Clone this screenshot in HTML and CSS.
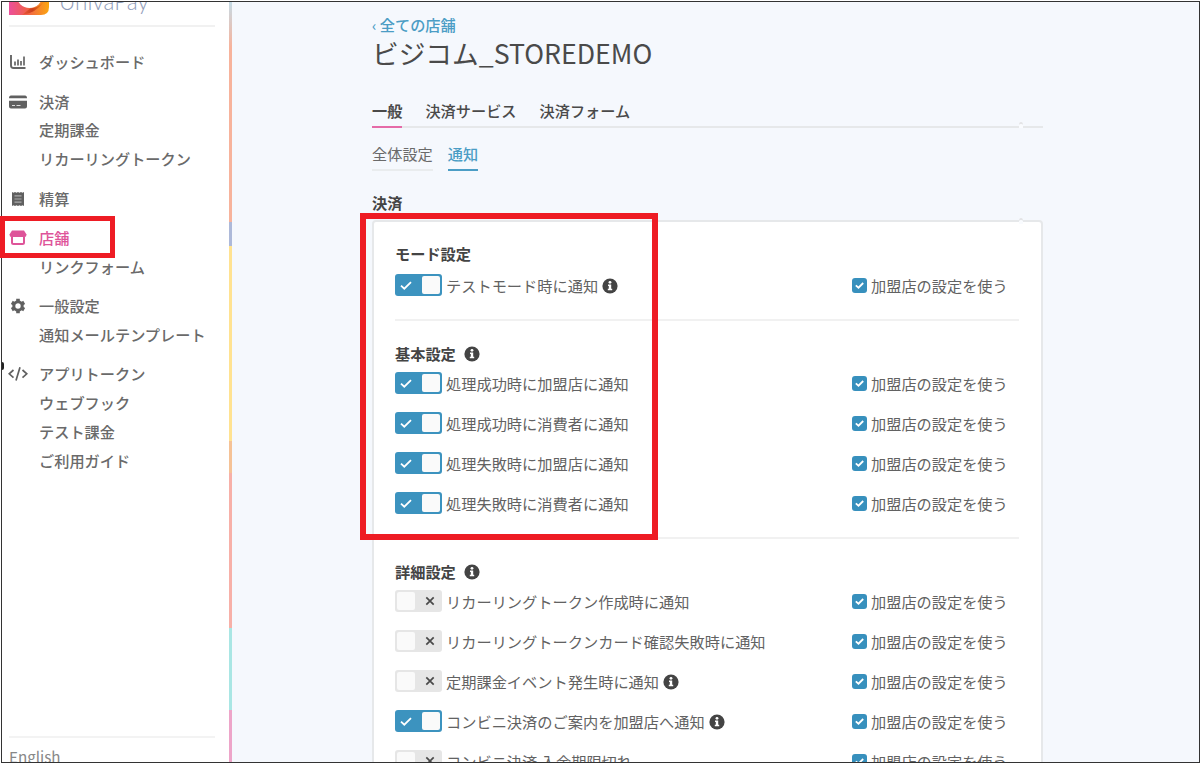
FILE: index.html
```html
<!DOCTYPE html>
<html lang="ja">
<head>
    <meta charset="UTF-8">
    <meta name="viewport" content="width=device-width, initial-scale=1.0">
    <title>ビジコム_STOREDEMO</title>
    <link rel="stylesheet" href="styles.css">
</head>
<body>

<!-- shared icons -->
<svg class="defs" width="0" height="0">
    <symbol id="check" viewBox="0 0 12 9"><path d="M1 4.6 L4.3 7.7 L11 1.2" fill="none" stroke="#fff" stroke-width="1.8"/></symbol>
    <symbol id="cross" viewBox="0 0 10 10"><path d="M1.3 1.3 L8.7 8.7 M8.7 1.3 L1.3 8.7" fill="none" stroke="#4a4a4a" stroke-width="1.7"/></symbol>
    <symbol id="info" viewBox="0 0 16 16"><circle cx="8" cy="8" r="7.6" fill="#444"/><circle cx="8" cy="4.3" r="1.4" fill="#fff"/><path d="M6 6.6 H9.2 V10.8 H10.2 V12.3 H5.8 V10.8 H6.8 V8.1 H6 Z" fill="#fff"/></symbol>
    <symbol id="box" viewBox="0 0 15 15"><rect width="15" height="15" rx="3" fill="#3790bd"/><path d="M3.8 7.3 L6.5 9.7 L11.2 5" fill="none" stroke="#fff" stroke-width="1.8"/></symbol>
</svg>

<div id="frame">
    <div id="sidebar">
        <div class="logo">
            <svg width="40" height="40" viewBox="0 0 40 40">
                <defs>
                    <linearGradient id="lg" x1="0" x2="1"><stop offset="0" stop-color="#ec4f9c"/><stop offset=".45" stop-color="#f0604a"/><stop offset="1" stop-color="#fba60f"/></linearGradient>
                    <linearGradient id="lg2" x1="0" x2="1"><stop offset="0" stop-color="#ee5a3c"/><stop offset=".45" stop-color="#c93f1c"/><stop offset="1" stop-color="#f9930f"/></linearGradient>
                </defs>
                <path d="M0 0 H40 V32 Q40 40 32 40 H0 Z" fill="url(#lg)"/>
                <path d="M13 40 Q28 38 36 25 Q30 33 21 33.5 Z" fill="url(#lg2)"/>
                <circle cx="20.500" cy="20" r="13" fill="#fff"/>
            </svg>
            <span>UnivaPay</span>
        </div>
        <ul class="menu">
            <li class="top"><svg width="18" height="16" viewBox="0 0 18 16"><path d="M2 1 V11.500 Q2 14 4.500 14 H16.500" fill="none" stroke="#666" stroke-width="1.900"/><path d="M6 11.500 V7.500 M9 11.500 V5.500 M12 11.500 V7 M15 11.500 V2.500" stroke="#666" stroke-width="1.700"/></svg>ダッシュボード</li>
            <li class="top"><svg width="18" height="16" viewBox="0 0 18 16"><path d="M2 1.500 H16 Q18 1.500 18 4.300 H0 Q0 1.500 2 1.500 Z M0 6.800 H18 V12.500 Q18 14.500 16 14.500 H2 Q0 14.500 0 12.500 Z" fill="#606060"/><path d="M3 11.500 H6 M7.500 11.500 H11.500" stroke="#ddd" stroke-width="1"/></svg>決済</li>
            <li>定期課金</li>
            <li>リカーリングトークン</li>
            <li class="top"><svg width="18" height="16" viewBox="0 0 18 16"><path d="M3 1 L4.500 1.700 L6 1 L7.500 1.700 L9 1 L10.500 1.700 L12 1 L13.500 1.700 L15 1 V15 L13.500 14.300 L12 15 L10.500 14.300 L9 15 L7.500 14.300 L6 15 L4.500 14.300 L3 15 Z" fill="#606060"/><path d="M5.500 4.800 H12.500 M5.500 8 H12.500 M5.500 11.200 H12.500" stroke="#aaa" stroke-width="1.200"/></svg>精算</li>
            <li class="top active"><svg width="18" height="16" viewBox="0 0 18 16"><path d="M3 .5 H15 L17.500 4.500 Q17.500 7 15.500 7 H2.500 Q0.500 7 0.500 4.500 Z" fill="#de5499"/><path d="M3 7 V12.500 Q3 14 4.500 14 H13.500 Q15 14 15 12.500 V7" fill="none" stroke="#de5499" stroke-width="2"/></svg>店舗</li>
            <li>リンクフォーム</li>
            <li class="top"><svg width="18" height="16" viewBox="0 0 18 16"><circle cx="9" cy="8" r="4.200" fill="none" stroke="#606060" stroke-width="3"/><path d="M9 .8 V3 M9 13 V15.200 M2.800 4.400 L4.800 5.600 M13.200 10.400 L15.200 11.600 M2.800 11.600 L4.800 10.400 M13.200 5.600 L15.200 4.400" stroke="#606060" stroke-width="3.600"/></svg>一般設定</li>
            <li>通知メールテンプレート</li>
            <li class="top"><svg width="20" height="16" viewBox="0 0 20 16"><path d="M5.500 4 L1.200 7.800 L5.500 11.600 M14.500 4 L18.800 7.800 L14.500 11.600 M12 1.200 L8 14.500" fill="none" stroke="#606060" stroke-width="1.700"/></svg>アプリトークン</li>
            <li>ウェブフック</li>
            <li>テスト課金</li>
            <li>ご利用ガイド</li>
        </ul>
        <div class="lang">English</div>
        <div class="handle"></div>
    </div>
    <div id="stripe"></div>

    <div id="main">
        <a class="back"><span>‹</span> 全ての店舗</a>
        <h1>ビジコム_STOREDEMO</h1>
        <div class="tabs notch">
            <a class="active">一般</a>
            <a>決済サービス</a>
            <a>決済フォーム</a>
        </div>
        <div class="subtabs">
            <a>全体設定</a>
            <a class="active">通知</a>
        </div>
        <h2>決済</h2>
        <div class="card notch">
            <div class="section mode">
                <h3>モード設定</h3>
                <div class="row"><i class="toggle on"><svg><use href="#check"/></svg></i><span>テストモード時に通知</span><svg class="info"><use href="#info"/></svg><label><svg><use href="#box"/></svg>加盟店の設定を使う</label></div>
            </div>
            <div class="section">
                <h3>基本設定<svg class="info"><use href="#info"/></svg></h3>
                <div class="row"><i class="toggle on"><svg><use href="#check"/></svg></i><span>処理成功時に加盟店に通知</span><label><svg><use href="#box"/></svg>加盟店の設定を使う</label></div>
                <div class="row"><i class="toggle on"><svg><use href="#check"/></svg></i><span>処理成功時に消費者に通知</span><label><svg><use href="#box"/></svg>加盟店の設定を使う</label></div>
                <div class="row"><i class="toggle on"><svg><use href="#check"/></svg></i><span>処理失敗時に加盟店に通知</span><label><svg><use href="#box"/></svg>加盟店の設定を使う</label></div>
                <div class="row"><i class="toggle on"><svg><use href="#check"/></svg></i><span>処理失敗時に消費者に通知</span><label><svg><use href="#box"/></svg>加盟店の設定を使う</label></div>
            </div>
            <div class="section">
                <h3>詳細設定<svg class="info"><use href="#info"/></svg></h3>
                <div class="row"><i class="toggle"><svg><use href="#cross"/></svg></i><span>リカーリングトークン作成時に通知</span><label><svg><use href="#box"/></svg>加盟店の設定を使う</label></div>
                <div class="row"><i class="toggle"><svg><use href="#cross"/></svg></i><span>リカーリングトークンカード確認失敗時に通知</span><label><svg><use href="#box"/></svg>加盟店の設定を使う</label></div>
                <div class="row"><i class="toggle"><svg><use href="#cross"/></svg></i><span>定期課金イベント発生時に通知</span><svg class="info"><use href="#info"/></svg><label><svg><use href="#box"/></svg>加盟店の設定を使う</label></div>
                <div class="row"><i class="toggle on"><svg><use href="#check"/></svg></i><span>コンビニ決済のご案内を加盟店へ通知</span><svg class="info"><use href="#info"/></svg><label><svg><use href="#box"/></svg>加盟店の設定を使う</label></div>
                <div class="row"><i class="toggle"><svg><use href="#cross"/></svg></i><span>コンビニ決済 入金期限切れ</span><label><svg><use href="#box"/></svg>加盟店の設定を使う</label></div>
            </div>
        </div>
    </div>
</div>

<!-- red marker boxes -->
<div class="marker marker-menu"></div>
<div class="marker marker-settings"></div>

</body>
</html>
```
FILE: styles.css
```css
* {
    margin: 0;
    padding: 0;
    box-sizing: border-box;
}

body {
    height: 764px;
    padding: 1px;
    overflow: hidden;
    background-color: #fff;
    font-family: "Noto Sans CJK JP", sans-serif;
    font-size: 15.2px;
    line-height: 24px;
    color: #6a6a6a;
}

.defs {
    position: absolute;
}

#frame {
    display: flex;
    width: 1199px;
    height: 762px;
    border: 1px solid #333;
    background-color: #f5f8fd;
    overflow: hidden;
}

/* sidebar */
#sidebar {
    position: relative;
    display: flex;
    flex-direction: column;
    width: 227px;
    height: 760px;
    padding: 0 14px 0 7px;
    background-color: #fff;
}

.logo {
    display: flex;
    flex-shrink: 0;
    align-items: flex-end;
    height: 25px;
    padding-bottom: 10px;
    border-bottom: 2px solid #f1f1f1;
}

.logo svg {
    flex-shrink: 0;
}

.logo span {
    margin: 0 0 1px 10px;
    font-family: Lato, sans-serif;
    font-weight: 300;
    font-size: 22.5px;
    line-height: 24px;
    color: #8f9dba;
}

.menu {
    margin-top: 9.2px;
    list-style: none;
    font-weight: 500;
}

.menu li {
    display: flex;
    align-items: center;
    height: 28.8px;
    padding-left: 30px;
    white-space: nowrap;
}

.menu li.top {
    margin-top: 10.6px;
    padding-left: 0;
}

.menu svg {
    width: 20px;
    margin: 2px 11px 0 -1px;
}

.menu .active {
    color: #de5499;
}

.lang {
    margin-top: auto;
    margin-bottom: -6px;
    padding-top: 6px;
    border-top: 2px solid #f3f3f3;
    color: #888;
}

.handle {
    position: absolute;
    left: 0;
    top: 360px;
    width: 2px;
    height: 8px;
    border-radius: 0 3px 3px 0;
    background-color: #222;
}

#stripe {
    width: 3px;
    height: 760px;
    background: linear-gradient(#c5dbe6 0, #f7b39c 45px, #f7b39c 220px, #adb9d9 220px, #adb9d9 244px, #ffe291 244px, #ffe291 439px, #f5c296 439px, #f5c296 471px, #f7b0a8 471px, #f7b0a8 626px, #a9e6e4 626px, #a9e6e4 708px, #eda5c9 708px);
}

/* main content */
#main {
    width: 811px;
    padding: 10px 0 0 140px;
}

.back {
    display: block;
    height: 24px;
    font-weight: 500;
    color: #4b9dc5;
}

.back span {
    font-size: 14px;
    line-height: 20px;
}

h1 {
    font-size: 26.7px;
    font-weight: 400;
    line-height: 34px;
    color: #4a4a4a;
}

.tabs {
    display: flex;
    gap: 23px;
    height: 29px;
    margin-top: 29px;
    border-bottom: 2px solid #e6e8ea;
    font-weight: 500;
    line-height: 22px;
    color: #4a4a4a;
}

.tabs .active {
    height: 29px;
    border-bottom: 2px solid #e56ba8;
    font-weight: 700;
}

/* small caret poking out of the line */
.notch {
    position: relative;
}

.notch::after {
    content: "";
    position: absolute;
    right: 20px;
    bottom: -2px;
    width: 4px;
    height: 4px;
    border-top: 2px solid #e3e4e6;
    border-radius: 50% 50% 0 0;
    background-color: #f9fbfe;
}

.card.notch::after {
    bottom: auto;
    top: -4px;
    right: 18px;
}

.subtabs {
    display: flex;
    gap: 15px;
    margin-top: 14px;
    line-height: 22px;
}

.subtabs a {
    padding-bottom: 5px;
    border-bottom: 2px solid #e9ecee;
}

.subtabs .active {
    border-color: #4b9dc5;
    font-weight: 500;
    color: #4b9dc5;
}

h2, h3 {
    font-size: 15.2px;
    font-weight: 700;
    line-height: 22px;
    color: #444;
}

h2 {
    margin: 20px 0 7px;
}

.card {
    height: 600px;
    padding: 0 22px 0 21px;
    border: 2px solid #e6e8ea;
    border-radius: 4px;
    background-color: #fff;
}

.section {
    padding: 21px 0 23px;
    border-bottom: 2px solid #f1f1f1;
}

.section.mode {
    padding-top: 20px;
}

h3 {
    display: flex;
    align-items: center;
    height: 24px;
    margin-bottom: 6px;
    padding-bottom: 2px;
}

h3 .info {
    margin: 2px 0 0 8px;
}

.mode h3 {
    margin-bottom: 8px;
}

.row {
    display: flex;
    align-items: center;
    height: 22px;
    margin-bottom: 18px;
    color: #626262;
}

.row:last-child {
    margin-bottom: 0;
}

.row span {
    margin: 0 4px;
    font-size: 15.22px;
}

.info {
    width: 16px;
    height: 16px;
}

.row .info {
    margin-top: 1px;
}

.toggle {
    display: flex;
    align-items: center;
    justify-content: flex-end;
    width: 47px;
    height: 22px;
    padding: 2px 7px 2px 2px;
    border-radius: 3px;
    background-color: #e6e6e6;
}

.toggle::before {
    content: "";
    width: 18px;
    height: 18px;
    margin-right: auto;
    border-radius: 2px;
    background-color: #fafafa;
}

.toggle svg {
    width: 10px;
    height: 10px;
}

.toggle.on {
    flex-direction: row-reverse;
    padding: 2px 2px 2px 5px;
    background-color: #3c93bf;
}

.toggle.on::before {
    margin: 0 0 0 auto;
}

.toggle.on svg {
    width: 12px;
    height: 9px;
}

label {
    display: flex;
    align-items: center;
    width: 167px;
    margin-left: auto;
}

label svg {
    width: 15px;
    height: 15px;
    margin: 1px 4px 0 0;
}

/* markers */
.marker {
    position: absolute;
    border: 6px solid #ee1c24;
}

.marker-menu {
    left: 0;
    top: 216px;
    width: 115px;
    height: 42px;
    border-width: 5px;
}

.marker-settings {
    left: 360px;
    top: 213px;
    width: 298px;
    height: 327px;
}
```
